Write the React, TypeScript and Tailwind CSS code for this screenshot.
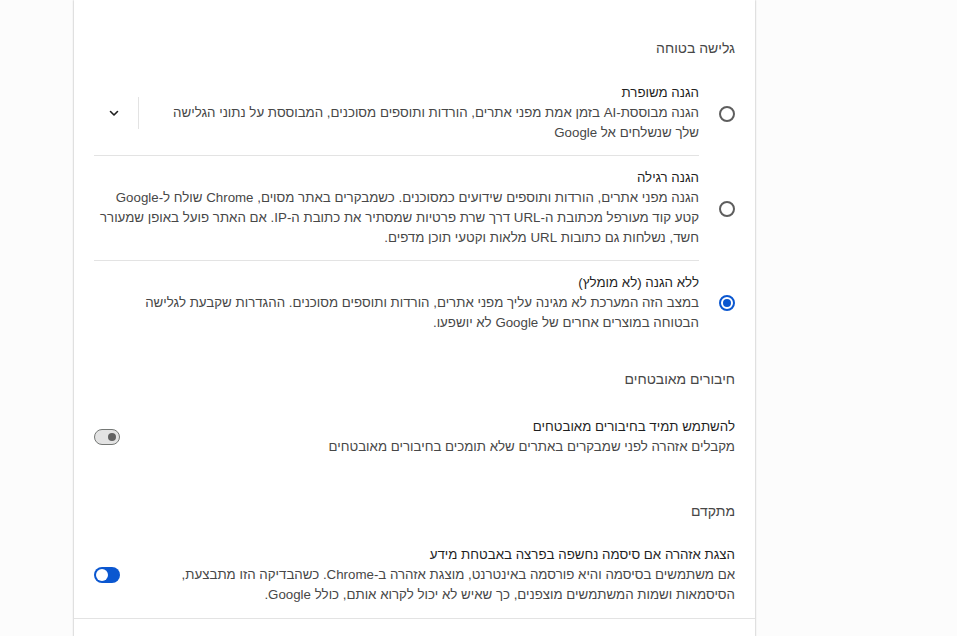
function Radio({ checked }: { checked?: boolean }) {
  return (
    <div className="flex w-[36px] shrink-0 items-center justify-start">
      <div
        className={
          checked
            ? 'flex h-[16px] w-[16px] items-center justify-center rounded-full border-2 border-[#0b57d0]'
            : 'h-[16px] w-[16px] rounded-full border-2 border-[#5e5e5e]'
        }
      >
        {checked && <div className="h-[8px] w-[8px] rounded-full bg-[#0b57d0]" />}
      </div>
    </div>
  );
}

function Toggle({ on }: { on?: boolean }) {
  return on ? (
    <div className="flex h-[16px] w-[26px] items-center justify-end rounded-full bg-[#0b57d0] px-[2px]">
      <div className="h-[12px] w-[12px] rounded-full bg-white" />
    </div>
  ) : (
    <div className="flex h-[16px] w-[26px] items-center justify-start rounded-full border border-[#747775] bg-[#e3e3e3] px-[3px]">
      <div className="h-[8px] w-[8px] rounded-full bg-[#616161]" />
    </div>
  );
}

function Chevron() {
  return (
    <svg width="12" height="12" viewBox="0 0 12 12" fill="none">
      <path d="M2.5 4.5 6 8l3.5-3.5" stroke="#1f1f1f" strokeWidth="1.6" strokeLinecap="round" strokeLinejoin="round" />
    </svg>
  );
}

export default function App() {
  return (
    <div
      dir="rtl"
      className="min-h-[636px] bg-[#fcfcfc] text-[13.3px] leading-[20px] text-[#1f1f1f]"
      style={{ fontFamily: '"Liberation Sans", "DejaVu Sans", sans-serif' }}
    >
      <div className="mr-[202px] w-[681px] bg-white pb-[18px] shadow-[0_0_2px_rgba(0,0,0,0.35)]">
        {/* Safe browsing */}
        <div className="px-[20px] pt-[38px]">
          <h2 className="text-[14px] font-medium text-[#474747]">גלישה בטוחה</h2>
        </div>

        <div className="mt-[13px] px-[20px]">
          <div className="flex items-stretch">
            <Radio />
            <div className="flex flex-1 items-center border-b border-[#e3e3e3] py-[12px]">
              <div className="flex-1">
                <div>הגנה משופרת</div>
                <div className="text-[#474747]">
                  <div>הגנה מבוססת-AI בזמן אמת מפני אתרים, הורדות ותוספים מסוכנים, המבוססת על נתוני הגלישה</div>
                  <div>שלך שנשלחים אל Google</div>
                </div>
              </div>
              <div className="flex h-[32px] items-center border-r border-[#e3e3e3] pr-[4px]">
                <div className="flex w-[40px] items-center justify-center">
                  <Chevron />
                </div>
              </div>
            </div>
          </div>

          <div className="flex items-stretch">
            <Radio />
            <div className="flex-1 border-b border-[#e3e3e3] py-[12px]">
              <div>הגנה רגילה</div>
              <div className="text-[#474747]">
                <div>הגנה מפני אתרים, הורדות ותוספים שידועים כמסוכנים. כשמבקרים באתר מסוים, Chrome שולח ל-Google</div>
                <div>קטע קוד מעורפל מכתובת ה-URL דרך שרת פרטיות שמסתיר את כתובת ה-IP. אם האתר פועל באופן שמעורר</div>
                <div>חשד, נשלחות גם כתובות URL מלאות וקטעי תוכן מדפים.</div>
              </div>
            </div>
          </div>

          <div className="flex items-stretch">
            <Radio checked />
            <div className="flex-1 py-[12px]">
              <div>ללא הגנה (לא מומלץ)</div>
              <div className="text-[#474747]">
                <div>במצב הזה המערכת לא מגינה עליך מפני אתרים, הורדות ותוספים מסוכנים. ההגדרות שקבעת לגלישה</div>
                <div>הבטוחה במוצרים אחרים של Google לא יושפעו.</div>
              </div>
            </div>
          </div>
        </div>

        {/* Secure connections */}
        <div className="mt-[24px] px-[20px]">
          <h2 className="text-[14px] font-medium text-[#474747]">חיבורים מאובטחים</h2>
        </div>
        <div className="mt-[16px] flex items-center px-[20px] py-[12px]">
          <div className="flex-1">
            <div>להשתמש תמיד בחיבורים מאובטחים</div>
            <div className="text-[#474747]">מקבלים אזהרה לפני שמבקרים באתרים שלא תומכים בחיבורים מאובטחים</div>
          </div>
          <Toggle />
        </div>

        {/* Advanced */}
        <div className="mt-[32px] px-[20px]">
          <h2 className="text-[14px] font-medium text-[#474747]">מתקדם</h2>
        </div>
        <div className="mt-[24px] flex items-center px-[20px] pb-[13px]">
          <div className="flex-1">
            <div>הצגת אזהרה אם סיסמה נחשפה בפרצה באבטחת מידע</div>
            <div className="text-[#474747]">
              <div>אם משתמשים בסיסמה והיא פורסמה באינטרנט, מוצגת אזהרה ב-Chrome. כשהבדיקה הזו מתבצעת,</div>
              <div>הסיסמאות ושמות המשתמשים מוצפנים, כך שאיש לא יכול לקרוא אותם, כולל Google.</div>
            </div>
          </div>
          <Toggle on />
        </div>
        <div className="border-b border-[#e3e3e3]" />
      </div>
    </div>
  );
}
